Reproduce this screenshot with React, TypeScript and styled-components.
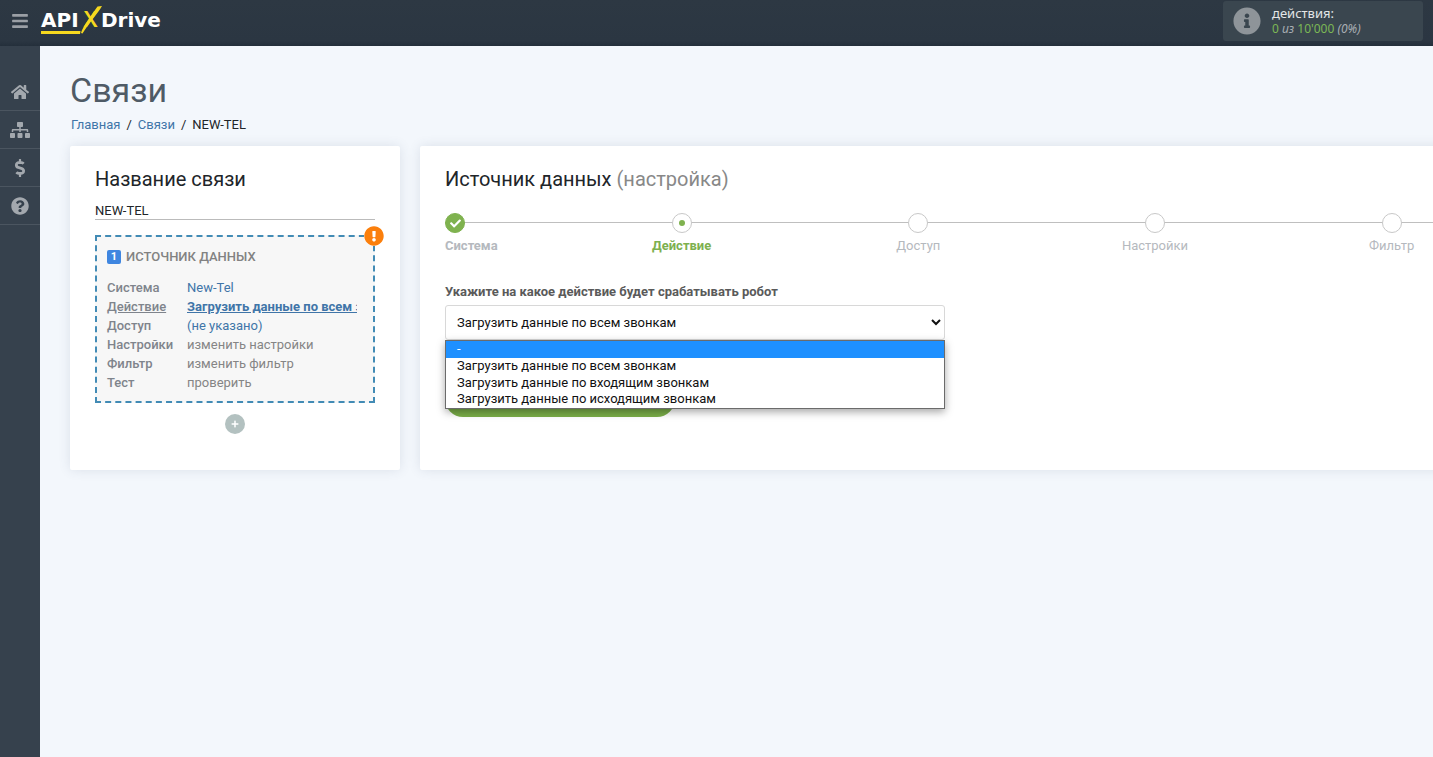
import React from "react";
import styled, { createGlobalStyle, css } from "styled-components";
import {
  FaBars,
  FaCheck,
  FaDollarSign,
  FaExclamationCircle,
  FaHome,
  FaInfoCircle,
  FaPlus,
  FaQuestionCircle,
  FaSitemap,
} from "react-icons/fa";

const GlobalStyle = createGlobalStyle`
  *, *::before, *::after { box-sizing: border-box; }
  body {
    margin: 0;
    background: #f3f7fc;
    color: #212529;
    font: 13px/19px Roboto, "Liberation Sans", sans-serif;
    overflow-x: hidden;
  }
  h1, h2, h3, p, ul, ol, dl, dd { margin: 0; padding: 0; font-weight: 400; }
  ul, ol { list-style: none; }
  a { color: #4075a8; text-decoration: none; }
  button, input, select { font: inherit; color: inherit; }
  button { border: 0; padding: 0; background: none; cursor: pointer; }
`;

const Page = styled.div`
  display: flex;
  flex-direction: column;
  min-height: 100vh;
`;

const TopBar = styled.header`
  display: flex;
  align-items: center;
  height: 46px;
  padding: 0 10px 4px 0;
  background: linear-gradient(#2d3843 0, #2b3642 41px, #242f3b 46px);
`;

const MenuButton = styled.button`
  display: flex;
  justify-content: center;
  width: 40px;
  color: #9a9fa5;
  font-size: 18px;
`;

const LogoLink = styled.a`
  display: block;
  height: 36px;
`;

const LogoText = styled.text`
  font: 700 20px "DejaVu Sans", Inter, sans-serif;
  fill: #fff;
`;

const LogoMark = styled.text`
  font: 600 21px Inter, sans-serif;
  fill: #f6d81f;
`;

const Usage = styled.div`
  display: flex;
  align-items: center;
  gap: 11px;
  width: 200px;
  height: 40px;
  margin-left: auto;
  padding: 0 10px;
  border-radius: 3px;
  background: #3a464f;
  color: #8e9499;
  font: 12px/16px "Noto Sans", "Open Sans", sans-serif;
`;

const UsageTitle = styled.div`
  color: #e4e6e8;
  font-size: 13px;
`;

const UsageValue = styled.div`
  color: #a9aeb3;
  font-style: italic;

  b {
    color: #7cb855;
    font-weight: 400;
    font-style: normal;
  }
`;

const Body = styled.div`
  display: flex;
  flex: 1;
`;

const SideNav = styled.nav`
  flex: none;
  width: 40px;
  padding-top: 27px;
  background: #36414d;
`;

const SideLink = styled.a`
  display: flex;
  align-items: center;
  justify-content: center;
  height: 38px;
  border-bottom: 1px solid #4b5560;
  color: #a3a8ae;
  font-size: 18px;
`;

const Main = styled.main`
  flex: 1;
  min-width: 0;
  padding: 24px 0 30px 30px;
  overflow: hidden;
`;

const PageTitle = styled.h1`
  color: #4f5b66;
  font-size: 34px;
  line-height: 40px;
`;

const Crumbs = styled.ol`
  display: flex;
  gap: 6px;
  margin: 5px 0 12px 1px;
`;

const Columns = styled.div`
  display: grid;
  grid-template-columns: 330px minmax(0, 1fr);
  gap: 20px;
  margin-right: -102px;
`;

const Card = styled.section`
  padding: 21px 25px 36px;
  border-radius: 2px;
  background: #fff;
  box-shadow: 0 0 12px rgba(60, 80, 110, 0.13);
`;

const CardTitle = styled.h2`
  font-size: 20px;
  line-height: 24px;

  span {
    color: #888;
  }
`;

const NameInput = styled.input`
  display: block;
  width: 100%;
  height: 18px;
  margin: 11px 0 15px;
  padding: 0;
  border: 0;
  border-bottom: 1px solid #bbb;
  outline: 0;
  background: none;
`;

const SourceBox = styled.div`
  position: relative;
  padding: 10px 16px 9px 10px;
  border: 2px dashed #428bb5;
  background: #f7f7f7;
`;

const Warning = styled.span`
  position: absolute;
  top: -11px;
  right: -11px;
  display: flex;
  border-radius: 50%;
  background: #fff;
  color: #fb7f0c;
  font-size: 20px;
`;

const SourceTitle = styled.h3`
  display: flex;
  align-items: center;
  gap: 5px;
  margin-bottom: 12px;
  color: #828282;
  font-size: 13px;
  font-weight: 500;
  text-transform: uppercase;
`;

const Num = styled.span`
  width: 14px;
  border-radius: 2px;
  background: #3f86e0;
  color: #fff;
  font-size: 11px;
  font-weight: 700;
  line-height: 14px;
  text-align: center;
`;

const Params = styled.dl`
  display: grid;
  grid-template-columns: 80px minmax(0, 1fr);
`;

const Term = styled.dt<{ $current?: boolean }>`
  color: #7f848c;
  font-weight: 500;
  ${(p) => p.$current && css`text-decoration: underline;`}
`;

const Value = styled.dd<{ $current?: boolean; $muted?: boolean }>`
  overflow: hidden;
  white-space: nowrap;

  a {
    ${(p) => p.$muted && css`color: #858585;`}
    ${(p) => p.$current && css`
      font-weight: 700;
      text-decoration: underline;
    `}
  }
`;

const AddButton = styled.button`
  display: flex;
  align-items: center;
  justify-content: center;
  width: 20px;
  height: 20px;
  margin: 11px auto 0;
  border-radius: 50%;
  background: #b3c1c0;
  color: #fff;
  font-size: 8px;
`;

const Steps = styled.ol`
  display: grid;
  grid-template-columns: 3fr 6fr 6fr 6fr 6fr;
  margin-top: 22px;
`;

type StepState = "done" | "active" | "todo";

const Step = styled.li<{ $state: StepState }>`
  display: flex;
  flex-direction: column;
  align-items: ${(p) => (p.$state === "done" ? "flex-start" : "center")};
  gap: 3px;
  background: linear-gradient(#bfbfbf, #bfbfbf) 0 9px / 100% 1px no-repeat;
  color: ${(p) => (p.$state === "active" ? "#7db04f" : "#b5b9be")};
  font-weight: ${(p) => (p.$state === "todo" ? 400 : 700)};
`;

const Marker = styled.span<{ $state: StepState }>`
  display: flex;
  align-items: center;
  justify-content: center;
  width: 20px;
  height: 20px;
  border: 1px solid ${(p) => (p.$state === "done" ? "#7fb24f" : "#c8c8c8")};
  border-radius: 50%;
  background: ${(p) => (p.$state === "done" ? "#7fb24f" : "#fff")};
  color: #fff;
  font-size: 11px;
`;

const Dot = styled.span`
  width: 6px;
  height: 6px;
  border-radius: 50%;
  background: #7fb24f;
`;

const Form = styled.form`
  display: flex;
  flex-direction: column;
  align-items: flex-start;
  margin-top: 27px;
`;

const FieldLabel = styled.label`
  margin-bottom: 4px;
  color: #5a5a5a;
  font-weight: 700;
`;

const Field = styled.div`
  position: relative;
  width: 500px;
  max-width: 100%;
`;

const Select = styled.select`
  display: block;
  width: 100%;
  height: 35px;
  padding: 0 7px;
  border: 1px solid #d8d8d8;
  border-radius: 3px;
  background: #fff;
  color: #111;
`;

const Popup = styled.ul`
  position: absolute;
  top: 100%;
  left: 0;
  right: 0;
  display: grid;
  grid-auto-rows: 1fr;
  height: 69px;
  border: 1px solid #6b6b6b;
  background: #fff;
  color: #111;
  line-height: 16px;
  box-shadow: 0 3px 8px rgba(0, 0, 0, 0.35);
`;

const PopupItem = styled.li<{ $hover?: boolean }>`
  padding-left: 11px;
  ${(p) => p.$hover && css`
    background: #1e90ff;
    color: #fff;
  `}
`;

const SubmitButton = styled.button`
  width: 230px;
  height: 36px;
  margin-top: 41px;
  border-radius: 18px;
  background: #7aae48;
`;

const nav = [
  { label: "Главная", icon: <FaHome /> },
  { label: "Связи", icon: <FaSitemap size={20} /> },
  { label: "Оплата", icon: <FaDollarSign /> },
  { label: "Помощь", icon: <FaQuestionCircle /> },
];

const params = [
  { term: "Система", value: "New-Tel" },
  { term: "Действие", value: "Загрузить данные по всем звонкам", current: true },
  { term: "Доступ", value: "(не указано)" },
  { term: "Настройки", value: "изменить настройки", muted: true },
  { term: "Фильтр", value: "изменить фильтр", muted: true },
  { term: "Тест", value: "проверить", muted: true },
];

const steps: { label: string; state: StepState }[] = [
  { label: "Система", state: "done" },
  { label: "Действие", state: "active" },
  { label: "Доступ", state: "todo" },
  { label: "Настройки", state: "todo" },
  { label: "Фильтр", state: "todo" },
];

const actions = [
  "-",
  "Загрузить данные по всем звонкам",
  "Загрузить данные по входящим звонкам",
  "Загрузить данные по исходящим звонкам",
];

function Logo() {
  return (
    <LogoLink href="#" aria-label="ApiXDrive">
      <svg width="124" height="36" viewBox="0 0 124 36">
        <LogoText x="1" y="24">API</LogoText>
        <LogoMark x="43" y="24">X</LogoMark>
        <LogoText x="61" y="24">Drive</LogoText>
        <path d="M1 28H40.500L40 31H1Z" fill="#f6d81f" />
        <path d="M57.500 3.500L62 3C58 10 47 23 42.500 30.500L41 30C43 23 51 13 57.500 3.500Z" fill="#f6d81f" />
      </svg>
    </LogoLink>
  );
}

export default function App() {
  const [action, setAction] = React.useState(actions[1]);
  const [name, setName] = React.useState("NEW-TEL");

  return (
    <Page>
      <GlobalStyle />
      <TopBar>
        <MenuButton type="button" aria-label="Меню"><FaBars /></MenuButton>
        <Logo />
        <Usage>
          <FaInfoCircle size={28} />
          <div>
            <UsageTitle>действия:</UsageTitle>
            <UsageValue><b>0</b> из <b>10'000</b> (0%)</UsageValue>
          </div>
        </Usage>
      </TopBar>
      <Body>
        <SideNav>
          {nav.map((n) => (
            <SideLink key={n.label} href="#" aria-label={n.label}>{n.icon}</SideLink>
          ))}
        </SideNav>
        <Main>
          <PageTitle>Связи</PageTitle>
          <Crumbs>
            <li><a href="#">Главная</a></li>
            <li>/</li>
            <li><a href="#">Связи</a></li>
            <li>/</li>
            <li>NEW-TEL</li>
          </Crumbs>
          <Columns>
            <Card>
              <CardTitle id="name-title">Название связи</CardTitle>
              <NameInput
                aria-labelledby="name-title"
                value={name}
                onChange={(e) => setName(e.target.value)}
              />
              <SourceBox>
                <Warning><FaExclamationCircle /></Warning>
                <SourceTitle><Num>1</Num>Источник данных</SourceTitle>
                <Params>
                  {params.map((p) => (
                    <React.Fragment key={p.term}>
                      <Term $current={p.current}>{p.term}</Term>
                      <Value $current={p.current} $muted={p.muted}><a href="#">{p.value}</a></Value>
                    </React.Fragment>
                  ))}
                </Params>
              </SourceBox>
              <AddButton type="button" aria-label="Добавить"><FaPlus /></AddButton>
            </Card>
            <Card>
              <CardTitle>Источник данных <span>(настройка)</span></CardTitle>
              <Steps>
                {steps.map((s) => (
                  <Step key={s.label} $state={s.state}>
                    <Marker $state={s.state}>
                      {s.state === "done" && <FaCheck />}
                      {s.state === "active" && <Dot />}
                    </Marker>
                    {s.label}
                  </Step>
                ))}
              </Steps>
              <Form onSubmit={(e) => e.preventDefault()}>
                <FieldLabel htmlFor="action">Укажите на какое действие будет срабатывать робот</FieldLabel>
                <Field>
                  <Select id="action" value={action} onChange={(e) => setAction(e.target.value)}>
                    {actions.map((a) => <option key={a}>{a}</option>)}
                  </Select>
                  <Popup role="listbox" aria-label="Действие">
                    {actions.map((a, i) => (
                      <PopupItem
                        key={a}
                        role="option"
                        aria-selected={a === action}
                        $hover={i === 0}
                        onClick={() => setAction(a)}
                      >
                        {a}
                      </PopupItem>
                    ))}
                  </Popup>
                </Field>
                <SubmitButton type="submit" aria-label="Продолжить" />
              </Form>
            </Card>
          </Columns>
        </Main>
      </Body>
    </Page>
  );
}
